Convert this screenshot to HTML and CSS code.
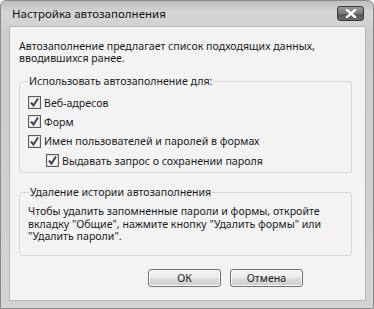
FILE: index.html
```html
<!DOCTYPE html>
<html lang="ru">
<head>
    <meta charset="UTF-8">
    <meta name="viewport" content="width=device-width, initial-scale=1.0">
    <title>Настройка автозаполнения</title>
    <link rel="stylesheet" href="styles.css">
</head>
<body>
    <div class="window">
        <div class="titlebar">
            <span class="title">Настройка автозаполнения</span>
            <button class="close" aria-label="Закрыть">
                <svg width="14" height="9" viewBox="0 0 14 9">
                    <path d="M3 1 L11 8 M11 1 L3 8" stroke="#fff" stroke-width="2.4" stroke-linecap="square"/>
                </svg>
            </button>
        </div>
        <div class="client">
            <p class="intro">Автозаполнение предлагает список подходящих данных, вводившихся ранее.</p>

            <fieldset class="group">
                <legend>Использовать автозаполнение для:</legend>
                <label class="check"><span class="box"></span>Веб-адресов</label>
                <label class="check"><span class="box"></span>Форм</label>
                <label class="check"><span class="box"></span>Имен пользователей и паролей в формах</label>
                <label class="check sub"><span class="box"></span>Выдавать запрос о сохранении пароля</label>
            </fieldset>

            <fieldset class="group history">
                <legend>Удаление истории автозаполнения</legend>
                <p>Чтобы удалить запомненные пароли и формы, откройте вкладку "Общие", нажмите кнопку "Удалить формы" или "Удалить пароли".</p>
            </fieldset>

            <div class="actions">
                <button class="btn">ОК</button>
                <button class="btn">Отмена</button>
            </div>
        </div>
    </div>
</body>
</html>
```

FILE: styles.css
```css
* {
    margin: 0;
    padding: 0;
    box-sizing: border-box;
}

body {
    font-family: "Noto Sans", "Open Sans", sans-serif;
    font-size: 10.6px;
    color: #1a1a1a;
    background: #ffffff;
}

.window {
    width: 374px;
    height: 309px;
    padding: 0 7px 7px 8px;
    background: linear-gradient(to bottom, #bdbdbd 0, #d6d6d6 12px, #cdcdcd 40px, #d3d3d3 100%);
    border: 1px solid #8a8a8a;
    border-radius: 6px 6px 0 0;
    display: flex;
    flex-direction: column;
}

.titlebar {
    height: 25px;
    display: flex;
    align-items: center;
    justify-content: space-between;
    padding: 0 2px 0 3px;
}

.title {
    font-size: 11.5px;
    color: #111;
}

.close {
    width: 27px;
    height: 15px;
    margin-top: -1px;
    border: 1px solid #3a3a3a;
    border-radius: 3px;
    background: linear-gradient(to bottom, #9a9a9a 0, #7a7a7a 50%, #555 51%, #6a6a6a 100%);
    display: flex;
    align-items: center;
    justify-content: center;
}

.client {
    flex: 1;
    background: #f3f3f3;
    border: 1px solid #b4b4b4;
    padding: 13px 13px 0 9px;
    display: flex;
    flex-direction: column;
}

.intro {
    line-height: 12px;
    padding-right: 20px;
}

.group {
    border: 1px solid #d6d6d6;
    border-radius: 3px;
    padding: 5px 8px 2px 7px;
    margin-top: 11px;
}

.group legend {
    padding: 0 1px;
    margin-left: 1px;
    line-height: 13px;
}

.check {
    display: flex;
    align-items: center;
    height: 19.3px;
    padding-left: 1px;
}

.check.sub {
    padding-left: 19px;
}

.box {
    width: 13px;
    height: 13px;
    margin-right: 3px;
    border: 1px solid #5a5a5a;
    background: #f7f7f7 url("data:image/svg+xml;utf8,<svg xmlns='http://www.w3.org/2000/svg' width='11' height='11' viewBox='0 0 11 11'><path d='M2 5.5 L4.5 8.5 L9 1.5' fill='none' stroke='%23444' stroke-width='2'/></svg>") no-repeat center;
    box-shadow: inset 0 0 0 1px #e0e0e0;
}

.history {
    margin-top: 13px;
    padding: 0 8px 12px 8px;
}

.history p {
    line-height: 12.5px;
    margin-top: 6px;
}

.actions {
    display: flex;
    justify-content: flex-end;
    gap: 9px;
    padding: 13px 49px 0 0;
}

.btn {
    width: 73px;
    height: 18px;
    font-family: inherit;
    font-size: 10.6px;
    color: #1a1a1a;
    border: 1px solid #707070;
    border-radius: 3px;
    background: linear-gradient(to bottom, #f4f4f4 0, #ebebeb 50%, #dddddd 51%, #cfcfcf 100%);
    box-shadow: inset 0 0 0 1px #fafafa;
}
```
